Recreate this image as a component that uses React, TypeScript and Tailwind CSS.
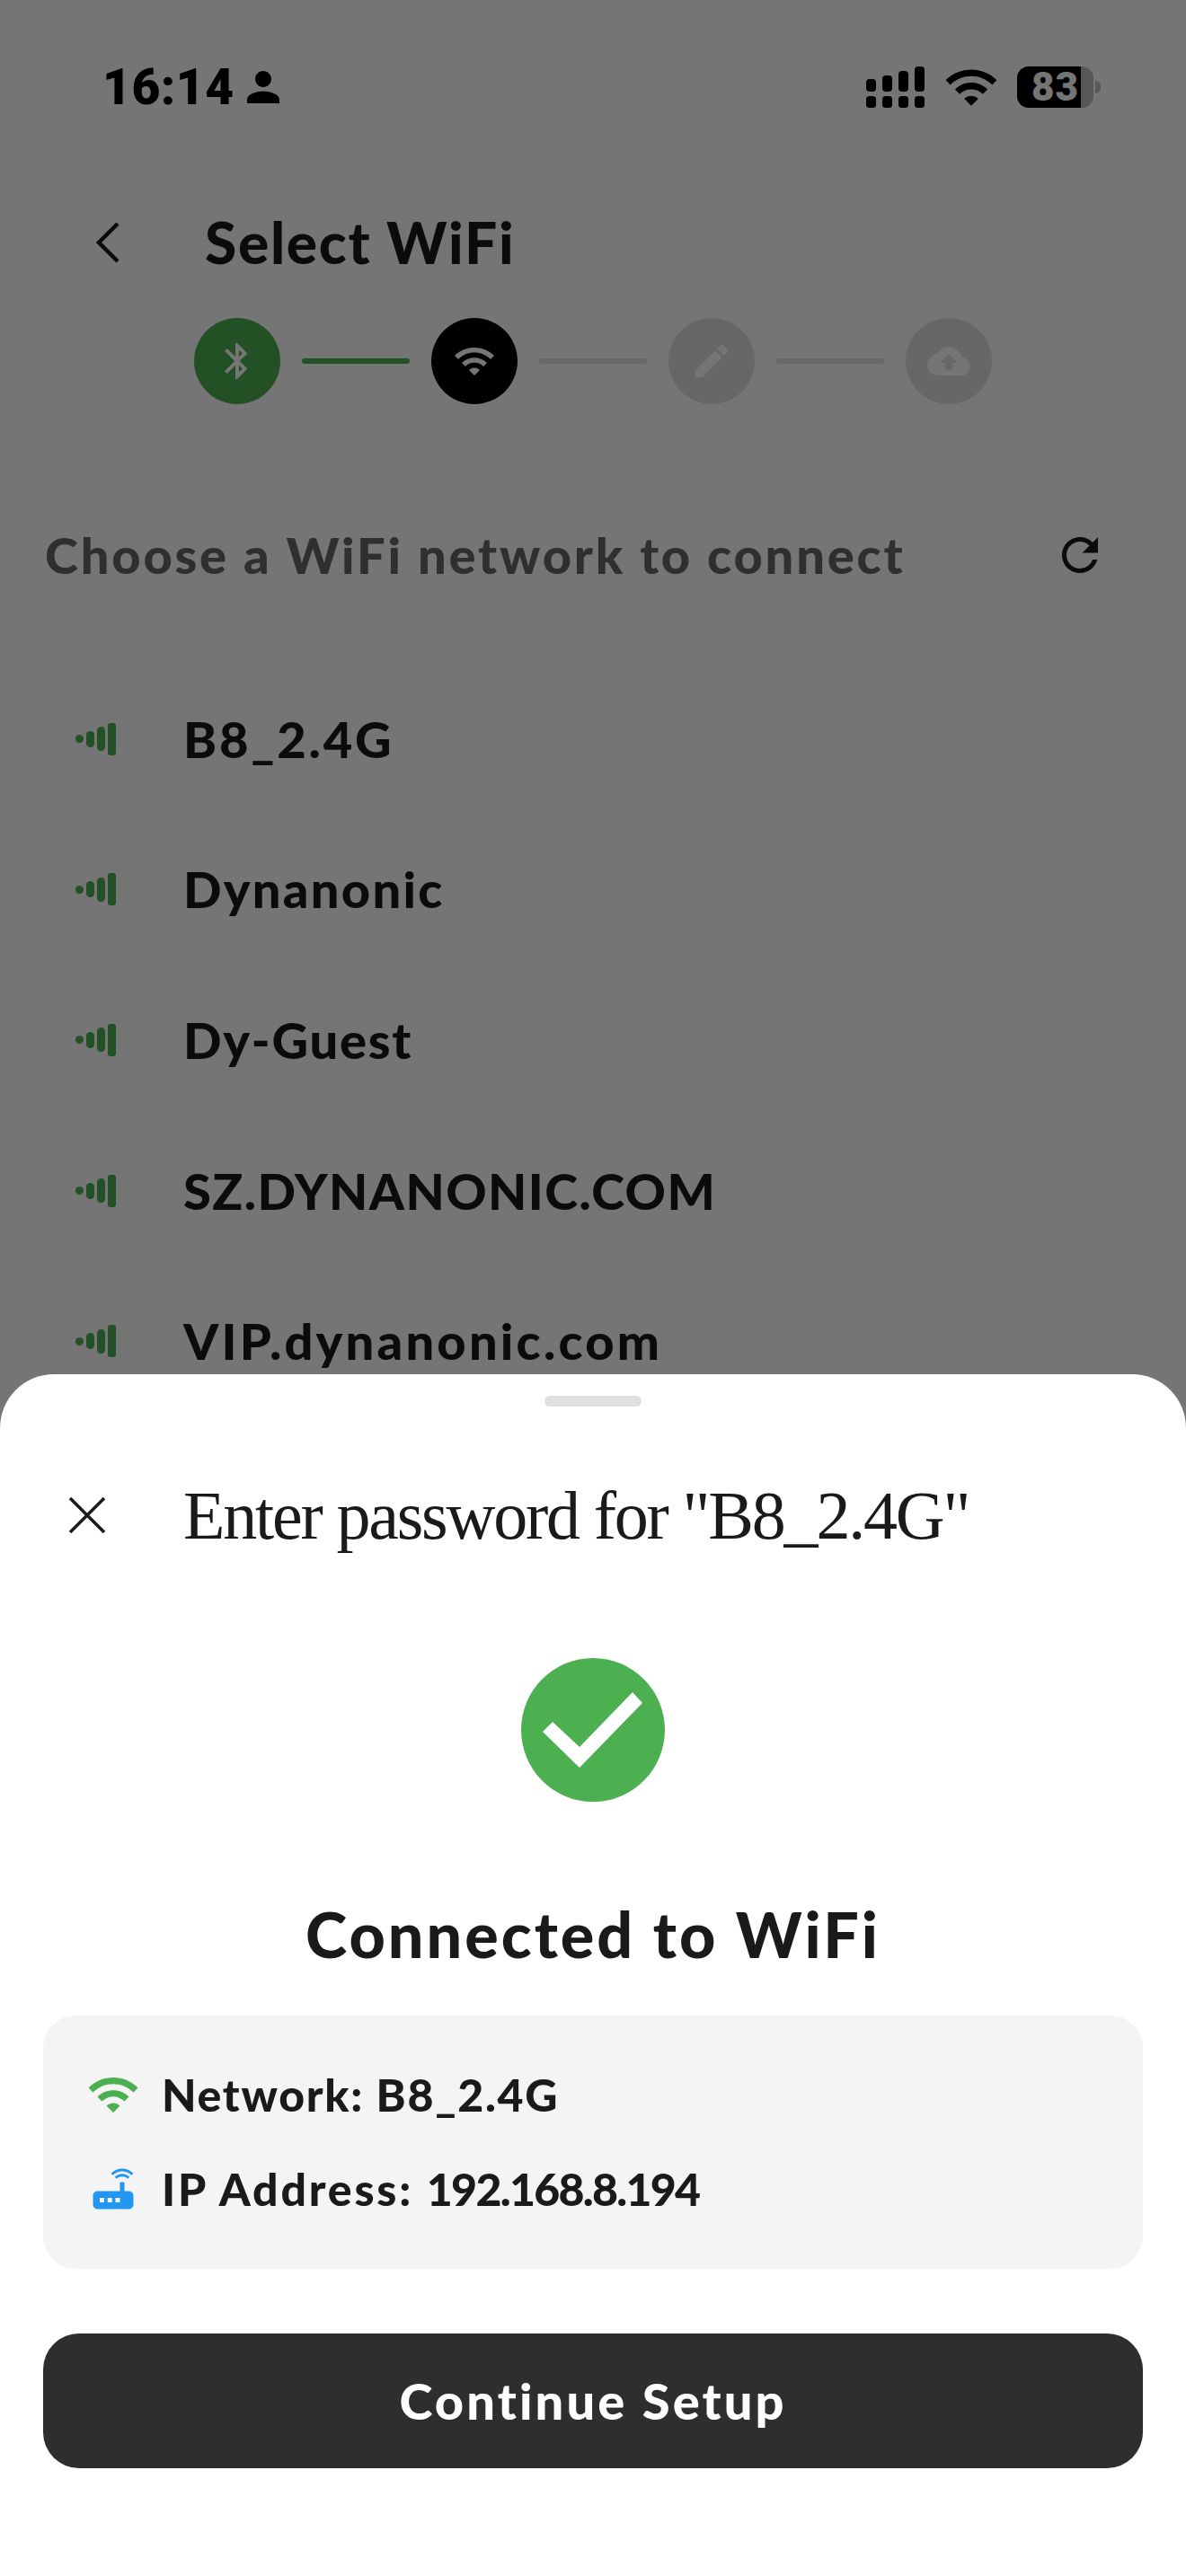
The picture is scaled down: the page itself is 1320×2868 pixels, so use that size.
import { MdBluetooth, MdCloudUpload, MdEdit, MdPerson, MdRefresh, MdRouter, MdWifi } from "react-icons/md";

const networks = [
    { name: "B8_2.4G", spacing: "tracking-[2.8px]" },
    { name: "Dynanonic", spacing: "tracking-[2.3px]" },
    { name: "Dy-Guest", spacing: "tracking-[1.8px]" },
    { name: "SZ.DYNANONIC.COM", spacing: "tracking-[1.4px]" },
    { name: "VIP.dynanonic.com", spacing: "tracking-[3.2px]" },
];

function SignalBars() {
    return (
        <div className="flex items-center gap-[3px] w-[45px]">
            <div className="w-[9px] h-[9px] rounded-full bg-[#4caf50]" />
            <div className="w-[9px] h-[18px] rounded-full bg-[#4caf50]" />
            <div className="w-[9px] h-[27px] rounded-full bg-[#4caf50]" />
            <div className="w-[9px] h-[36px] rounded-[3px] bg-[#4caf50]" />
        </div>
    );
}

function CellIcon() {
    return (
        <svg width="66" height="46" viewBox="0 0 66 46" fill="#000">
            <rect x="0" y="14" width="11" height="14" rx="4" />
            <rect x="18" y="10" width="11" height="18" rx="4" />
            <rect x="36" y="5" width="11" height="23" rx="4" />
            <rect x="54" y="0" width="11" height="28" rx="4" />
            <rect x="0" y="33" width="11" height="13" rx="3.5" />
            <rect x="18" y="33" width="11" height="13" rx="3.5" />
            <rect x="36" y="33" width="11" height="13" rx="3.5" />
            <rect x="54" y="33" width="11" height="13" rx="3.5" />
        </svg>
    );
}

function StatusBar() {
    return (
        <div className="flex items-center justify-between h-[46px] mt-[74px] pl-[114px] pr-[95px]">
            <div className="flex items-center gap-[14px] text-black">
                <span className="font-[Roboto,sans-serif] font-black text-[55px] leading-none tracking-[0.5px]">16:14</span>
                <MdPerson size={54} className="-ml-[9px]" />
            </div>
            <div className="flex items-center">
                <CellIcon />
                <MdWifi size={62} className="ml-[20px] text-black" />
                <div className="ml-[20px] flex items-center">
                    <div className="relative w-[85px] h-[46px] rounded-[13px] bg-[#bdbdbd]">
                        <div className="w-[71px] h-full rounded-l-[13px] bg-black" />
                        <span className="absolute inset-0 flex items-center justify-center font-[Roboto,sans-serif] font-black text-[44px] leading-none tracking-[1px] text-white">83</span>
                    </div>
                    <div className="ml-[2px] w-[6px] h-[14px] rounded-r-full bg-[#bdbdbd]" />
                </div>
            </div>
        </div>
    );
}

function Stepper() {
    return (
        <div className="flex items-center justify-center gap-[24px] mt-[52px]">
            <div className="w-[96px] h-[96px] rounded-full bg-[#4caf50] flex items-center justify-center text-white">
                <MdBluetooth size={48} />
            </div>
            <div className="w-[120px] h-[6px] rounded-full bg-[#4caf50]" />
            <div className="w-[96px] h-[96px] rounded-full bg-black flex items-center justify-center text-white">
                <MdWifi size={48} />
            </div>
            <div className="w-[120px] h-[6px] rounded-full bg-[#e0e0e0]" />
            <div className="w-[96px] h-[96px] rounded-full bg-[#e0e0e0] flex items-center justify-center text-white">
                <MdEdit size={48} />
            </div>
            <div className="w-[120px] h-[6px] rounded-full bg-[#e0e0e0]" />
            <div className="w-[96px] h-[96px] rounded-full bg-[#e0e0e0] flex items-center justify-center text-white">
                <MdCloudUpload size={48} />
            </div>
        </div>
    );
}

export default function App() {
    return (
        <div className="relative w-[1320px] h-[2868px] overflow-hidden bg-white font-[Lato,sans-serif] text-[#1a1a1a]">
            <StatusBar />

            <div className="flex items-center h-[64px] mt-[118px] pl-[107px]">
                <svg width="26" height="46" viewBox="0 0 26 46" fill="none" stroke="#1a1a1a" strokeWidth="4.5">
                    <path d="M24 2 3 23l21 21" />
                </svg>
                <h1 className="ml-[95px] text-[64px] font-black leading-none tracking-[1.7px] whitespace-nowrap">Select WiFi</h1>
            </div>
            <Stepper />

            <div className="flex items-center justify-between h-[60px] mt-[138px] pl-[50px] pr-[88px]">
                <h2 className="text-[56px] font-black leading-none text-[#666666] tracking-[2.8px] whitespace-nowrap">Choose a WiFi network to connect</h2>
                <MdRefresh size={60} className="text-[#1a1a1a]" />
            </div>

            <div className="flex flex-col mt-[91px]">
                {networks.map((item) => (
                    <div key={item.name} className="flex items-center gap-[75px] h-[167.6px] pl-[84px]">
                        <SignalBars />
                        <span className={`text-[56px] font-black leading-none whitespace-nowrap ${item.spacing}`}>{item.name}</span>
                    </div>
                ))}
            </div>

            {/* dim layer under the bottom sheet */}
            <div className="absolute inset-0 bg-black/54" />

            <div className="absolute left-0 right-0 bottom-0 h-[1338px] bg-white rounded-t-[60px] px-[48px]">
                <div className="w-[108px] h-[12px] rounded-full bg-[#e0e0e0] mx-auto mt-[24px]" />

                <div className="flex items-center h-[64px] mt-[89px] pl-[28px]">
                    <svg width="42" height="42" viewBox="0 0 42 42" fill="none" stroke="#1a1a1a" strokeWidth="3.5">
                        <path d="M2 2l38 38M40 2 2 40" />
                    </svg>
                    <h2 className="ml-[86px] font-['Liberation_Serif',serif] text-[76px] leading-none tracking-[-2.2px] whitespace-nowrap">
                        Enter password for "B8_2.4G"
                    </h2>
                </div>

                <div className="w-[160px] h-[160px] rounded-full bg-[#4caf50] flex items-center justify-center mx-auto mt-[127px]">
                    <svg width="112" height="84" viewBox="0 0 112 84" fill="#fff">
                        <path d="M100 0l11 12-70 72L0 44l11-11 30 28z" />
                    </svg>
                </div>

                <h3 className="mt-[112px] text-center text-[70px] font-black leading-none tracking-[3px]">Connected to WiFi</h3>

                <div className="mt-[56px] h-[282px] rounded-[36px] bg-[#f4f4f4] pl-[48px] pb-[2px] flex flex-col justify-center gap-[45px]">
                    <div className="flex items-center gap-[24px] h-[60px]">
                        <MdWifi size={60} className="text-[#4caf50]" />
                        <span className="text-[50px] font-black leading-none tracking-[1.7px] whitespace-nowrap">Network: B8_2.4G</span>
                    </div>
                    <div className="flex items-center gap-[24px] h-[60px]">
                        <MdRouter size={60} className="text-[#2196f3]" />
                        <span className="text-[50px] font-black leading-none tracking-[2.8px] whitespace-nowrap">
                            IP Address: <span className="tracking-[-1.7px]">192.168.8.194</span>
                        </span>
                    </div>
                </div>

                <button className="mt-[72px] w-full h-[150px] rounded-[40px] bg-[#2e2e2e] text-white text-[56px] font-black tracking-[3.1px]">
                    Continue Setup
                </button>
            </div>
        </div>
    );
}
